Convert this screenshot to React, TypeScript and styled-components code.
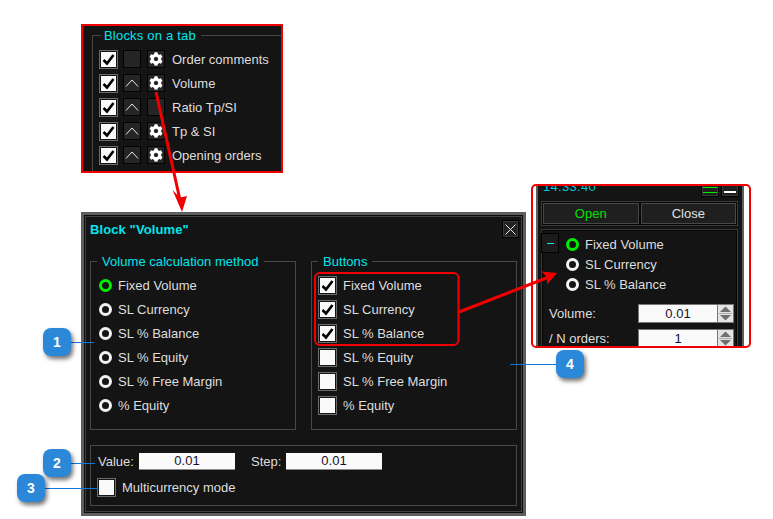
import React from "react";
import styled, { createGlobalStyle } from "styled-components";
import { FaCog } from "react-icons/fa";

const GlobalStyle = createGlobalStyle`
  html, body { margin: 0; padding: 0; background: #fff; }
  * { box-sizing: border-box; }
`;

const Canvas = styled.div`
  position: relative;
  width: 773px;
  height: 519px;
  overflow: hidden;
  background: #fff;
  font: 13px/15px "Liberation Sans", Arial, sans-serif;
  color: #dedede;
`;

const Group = styled.fieldset`
  margin: 0;
  padding: 0;
  min-width: 0;
  border: 1px solid #484848;
`;

const Legend = styled.legend<{ $offset?: number }>`
  margin-left: ${(p) => p.$offset ?? 6}px;
  padding: 0 5px 0 ${(p) => (p.$offset ? 3 : 5)}px;
  height: 15px;
  line-height: 15px;
  color: #00e6ec;
  letter-spacing: ${(p) => (p.$offset ? 0.2 : 0.05)}px;
`;

const RowList = styled.div<{ $left: number }>`
  display: flex;
  flex-direction: column;
  padding: 4px 0 0 ${(p) => p.$left}px;
`;

const Row = styled.div<{ $h?: number }>`
  display: flex;
  align-items: center;
  height: ${(p) => p.$h ?? 24}px;
  white-space: nowrap;
`;

/* ---------- top panel ---------- */
const TopPanel = styled.section`
  position: absolute;
  left: 81px;
  top: 24px;
  width: 202px;
  height: 149px;
  border: 2px solid #f00000;
  background: #141414;
  overflow: hidden;
  padding: 2px 0 0 9px;
`;

const TopGroup = styled(Group)`
  width: 210px;
  height: 170px;
`;

const CheckBox = styled.span`
  flex: none;
  display: flex;
  align-items: center;
  justify-content: center;
  width: 19px;
  height: 19px;
  border: 1px solid #6c6c6c;
  padding: 1px;
  background: #fafafa content-box;
  margin-right: 6px;
`;

const TopCheckBox = styled(CheckBox)`
  margin-right: 5px;
`;

const SquareButton = styled.span`
  flex: none;
  display: flex;
  align-items: center;
  justify-content: center;
  width: 18px;
  height: 18px;
  border: 1px solid #000;
  background: #252525;
  color: #fff;
  margin-right: 6px;
`;

const BlockName = styled.span`
  margin-left: 1px;
`;

const Check = () => (
  <svg width="15" height="15" viewBox="0 0 15 15">
    <polyline points="2.5,8 6,11.5 12.5,3" fill="none" stroke="#000" strokeWidth="2.6" />
  </svg>
);

const Chevron = () => (
  <svg width="14" height="14" viewBox="0 0 14 14">
    <polyline points="1,10.5 7,4 13,10.5" fill="none" stroke="#e8e8e8" strokeWidth="1" />
  </svg>
);

/* ---------- dialog ---------- */
const Dialog = styled.section`
  position: absolute;
  left: 81px;
  top: 212px;
  width: 445px;
  height: 304px;
  border: 3px solid #5e5e5e;
  padding: 1px;
  background: #0c0c0c;
`;

const DialogInner = styled.div`
  height: 100%;
  border: 1px solid #404040;
  background: #141414;
  padding: 0 4px 5px;
  display: flex;
  flex-direction: column;
`;

const TitleBar = styled.header`
  display: flex;
  align-items: center;
  justify-content: space-between;
  height: 24px;
  margin-bottom: 13px;
`;

const Title = styled.h1`
  margin: 0;
  font: bold 13px/15px "Liberation Sans", Arial, sans-serif;
  color: #00e6ec;
  letter-spacing: 0.1px;
`;

const CloseButton = styled.span`
  display: flex;
  align-items: center;
  justify-content: center;
  width: 17px;
  height: 18px;
  margin-right: -2px;
  border: 1px solid #000;
  outline: 1px solid #3a3a3a;
  outline-offset: -2px;
  background: #222;
`;

const Columns = styled.div`
  display: grid;
  grid-template-columns: 206px 206px;
  column-gap: 15px;
`;

const ColumnGroup = styled(Group)`
  height: 176px;
`;

const RadioDot = styled.span<{ $on?: boolean }>`
  flex: none;
  width: 13px;
  height: 13px;
  border-radius: 50%;
  border: 3.5px solid ${(p) => (p.$on ? "#00ee00" : "#f4f4f4")};
  background: #141414;
  margin-right: 6px;
`;

const BottomGroup = styled.div`
  margin-top: 15px;
  height: 61px;
  border: 1px solid #484848;
  padding: 7px 0 0 6px;
  display: flex;
  flex-direction: column;
  gap: 8px;
`;

const ValueRow = styled.div`
  display: flex;
  align-items: center;
  height: 17px;
  padding-left: 1px;
`;

const ValueLabel = styled.span<{ $w: number }>`
  width: ${(p) => p.$w}px;
`;

const ValueInput = styled.span<{ $gap?: number }>`
  width: 96px;
  height: 17px;
  margin-right: ${(p) => p.$gap ?? 0}px;
  background: #fafafa;
  border-bottom: 1px solid #8a8a8a;
  color: #101030;
  text-align: center;
  line-height: 16px;
`;

/* ---------- terminal crop ---------- */
const TerminalCrop = styled.section`
  position: absolute;
  left: 531px;
  top: 184px;
  width: 220px;
  height: 164px;
  border: 2px solid #f00000;
  border-radius: 5px;
  background: #fff;
  overflow: hidden;
  padding: 0 5px 0 3px;
`;

const Terminal = styled.div`
  height: 200px;
  border-left: 2px solid #5e5e5e;
  border-right: 2px solid #5e5e5e;
  background: #141414;
  padding: 0 4px 0 3px;
`;

const TimeBar = styled.div`
  display: flex;
  align-items: flex-start;
  justify-content: space-between;
  height: 15px;
`;

const Clock = styled.span`
  margin: -7px 0 0 2px;
  color: #00c8dc;
  letter-spacing: 0.3px;
`;

const WindowButtons = styled.div`
  display: flex;
  gap: 2px;
  margin-right: -1px;
  margin-top: -3px;
`;

const WindowButton = styled.span`
  width: 18px;
  height: 14px;
  border: 1px solid #000;
  outline: 1px solid #3a3a3a;
  outline-offset: -2px;
  background: #1f1f1f;
  display: flex;
  align-items: center;
  justify-content: center;
`;

const ActionFrame = styled.div`
  display: flex;
  gap: 2px;
  height: 25px;
  border: 1px solid #3a3a3a;
  background: #060606;
  padding: 1px 1px;
`;

const ActionButton = styled.span<{ $green?: boolean }>`
  flex: 1;
  display: flex;
  align-items: center;
  justify-content: center;
  background: #1f1f1f;
  border: 1px solid #484848;
  color: ${(p) => (p.$green ? "#00e000" : "#e0e0e0")};
`;

const BodyFrame = styled.div`
  position: relative;
  margin-top: 3px;
  height: 140px;
  border: 1px solid #3a3a3a;
  outline: 1px solid #060606;
  outline-offset: -2px;
  background: #141414;
  padding: 4px 0 0 24px;
`;

const CollapseTab = styled.span`
  position: absolute;
  left: -1px;
  top: 3px;
  width: 18px;
  height: 20px;
  border: 1px solid #000;
  background: #1c1c1c;
  display: flex;
  align-items: center;
  justify-content: center;
`;

const CollapseDash = styled.span`
  width: 7px;
  height: 1px;
  margin-top: 1px;
  background: #00f0f0;
`;

const FieldRows = styled.div`
  margin: 10px 3px 0 -17px;
  display: flex;
  flex-direction: column;
  gap: 6px;
`;

const FieldRow = styled.div`
  display: flex;
  align-items: center;
  justify-content: space-between;
  height: 19px;
`;

const SpinField = styled.div`
  display: flex;
  height: 19px;
  border: 1px solid #777;
  background: #e4e4e4;
`;

const SpinInput = styled.span`
  width: 79px;
  background: #fafafa;
  color: #101030;
  text-align: center;
  line-height: 18px;
  border-right: 1px solid #777;
`;

const SpinButtons = styled.span`
  display: block;
  width: 15px;
  height: 17px;
`;

const Spinner = () => (
  <SpinButtons>
    <svg width="15" height="17" viewBox="0 0 15 17">
      <polygon points="7.5,1.5 13,7 2,7" fill="#707070" />
      <rect x="1" y="8" width="13" height="1" fill="#aaa" />
      <polygon points="2,10 13,10 7.5,15.5" fill="#707070" />
    </svg>
  </SpinButtons>
);

/* ---------- annotations ---------- */
const AnnotationLayer = styled.svg`
  position: absolute;
  left: 0;
  top: 0;
  pointer-events: none;
`;

const Badge = styled.span<{ $x: number; $y: number }>`
  position: absolute;
  left: ${(p) => p.$x}px;
  top: ${(p) => p.$y}px;
  width: 28px;
  height: 28px;
  border-radius: 8px;
  background: #2b88d8;
  box-shadow: 2px 3px 4px rgba(0, 0, 0, 0.55);
  color: #fff;
  font-weight: bold;
  font-size: 14px;
  display: flex;
  align-items: center;
  justify-content: center;
`;

const blocks = [
  { name: "Order comments", up: false, gear: true },
  { name: "Volume", up: true, gear: true },
  { name: "Ratio Tp/SI", up: true, gear: false },
  { name: "Tp & SI", up: true, gear: true },
  { name: "Opening orders", up: true, gear: true },
];

const methods = ["Fixed Volume", "SL Currency", "SL % Balance", "SL % Equity", "SL % Free Margin", "% Equity"];

export default function App() {
  return (
    <Canvas>
      <GlobalStyle />

      <TopPanel>
        <TopGroup>
          <Legend $offset={8}>Blocks on a tab</Legend>
          <RowList $left={6}>
            {blocks.map((b) => (
              <Row key={b.name}>
                <TopCheckBox>
                  <Check />
                </TopCheckBox>
                <SquareButton>{b.up && <Chevron />}</SquareButton>
                <SquareButton>{b.gear && <FaCog size={14} />}</SquareButton>
                <BlockName>{b.name}</BlockName>
              </Row>
            ))}
          </RowList>
        </TopGroup>
      </TopPanel>

      <Dialog>
        <DialogInner>
          <TitleBar>
            <Title>Block "Volume"</Title>
            <CloseButton>
              <svg width="11" height="11" viewBox="0 0 11 11">
                <path d="M0.5 0.5 L10.5 10.5 M10.5 0.5 L0.5 10.5" stroke="#e8e8e8" strokeWidth="1" />
              </svg>
            </CloseButton>
          </TitleBar>

          <Columns>
            <ColumnGroup>
              <Legend>Volume calculation method</Legend>
              <RowList $left={8}>
                {methods.map((m, i) => (
                  <Row key={m}>
                    <RadioDot $on={i === 0} />
                    {m}
                  </Row>
                ))}
              </RowList>
            </ColumnGroup>
            <ColumnGroup>
              <Legend>Buttons</Legend>
              <RowList $left={6}>
                {methods.map((m, i) => (
                  <Row key={m}>
                    <CheckBox>{i < 3 && <Check />}</CheckBox>
                    {m}
                  </Row>
                ))}
              </RowList>
            </ColumnGroup>
          </Columns>

          <BottomGroup>
            <ValueRow>
              <ValueLabel $w={41}>Value:</ValueLabel>
              <ValueInput $gap={16}>0.01</ValueInput>
              <ValueLabel $w={35}>Step:</ValueLabel>
              <ValueInput>0.01</ValueInput>
            </ValueRow>
            <Row $h={19}>
              <CheckBox />
              Multicurrency mode
            </Row>
          </BottomGroup>
        </DialogInner>
      </Dialog>

      <TerminalCrop>
        <Terminal>
          <TimeBar>
            <Clock>14:33:40</Clock>
            <WindowButtons>
              <WindowButton>
                <svg width="14" height="8" viewBox="0 0 14 8">
                  <path d="M0 1.5H14M0 6.5H14" stroke="#00f000" strokeWidth="1" />
                </svg>
              </WindowButton>
              <WindowButton>
                <svg width="14" height="8" viewBox="0 0 14 8">
                  <path d="M1 6H13" stroke="#fff" strokeWidth="2" />
                </svg>
              </WindowButton>
            </WindowButtons>
          </TimeBar>
          <ActionFrame>
            <ActionButton $green>Open</ActionButton>
            <ActionButton>Close</ActionButton>
          </ActionFrame>
          <BodyFrame>
            <CollapseTab>
              <CollapseDash />
            </CollapseTab>
            {methods.slice(0, 3).map((m, i) => (
              <Row key={m} $h={20}>
                <RadioDot $on={i === 0} />
                {m}
              </Row>
            ))}
            <FieldRows>
              <FieldRow>
                Volume:
                <SpinField>
                  <SpinInput>0.01</SpinInput>
                  <Spinner />
                </SpinField>
              </FieldRow>
              <FieldRow>
                / N orders:
                <SpinField>
                  <SpinInput>1</SpinInput>
                  <Spinner />
                </SpinField>
              </FieldRow>
            </FieldRows>
          </BodyFrame>
        </Terminal>
      </TerminalCrop>

      <AnnotationLayer width="773" height="519" viewBox="0 0 773 519">
        <rect x="315" y="273" width="143.5" height="72" rx="5" fill="none" stroke="#f00000" strokeWidth="2" />
        <line x1="156" y1="92" x2="180" y2="200" stroke="#f00000" strokeWidth="3" />
        <polygon points="182,212 172.5,190 180,197.5 187,196" fill="#f00000" />
        <line x1="459" y1="312" x2="549" y2="277" stroke="#f00000" strokeWidth="3" />
        <polygon points="557,273 541.5,271.5 547,277 547,284.5" fill="#f00000" />
        <g stroke="#0a78e0" strokeWidth="1">
          <line x1="71" y1="342.5" x2="94" y2="342.5" />
          <line x1="71" y1="463.5" x2="95" y2="463.5" />
          <line x1="45" y1="488.5" x2="97" y2="488.5" />
          <line x1="510" y1="364.5" x2="556" y2="364.5" />
        </g>
      </AnnotationLayer>

      <Badge $x={43} $y={328}>1</Badge>
      <Badge $x={43} $y={449}>2</Badge>
      <Badge $x={17} $y={474}>3</Badge>
      <Badge $x={556} $y={350}>4</Badge>
    </Canvas>
  );
}
